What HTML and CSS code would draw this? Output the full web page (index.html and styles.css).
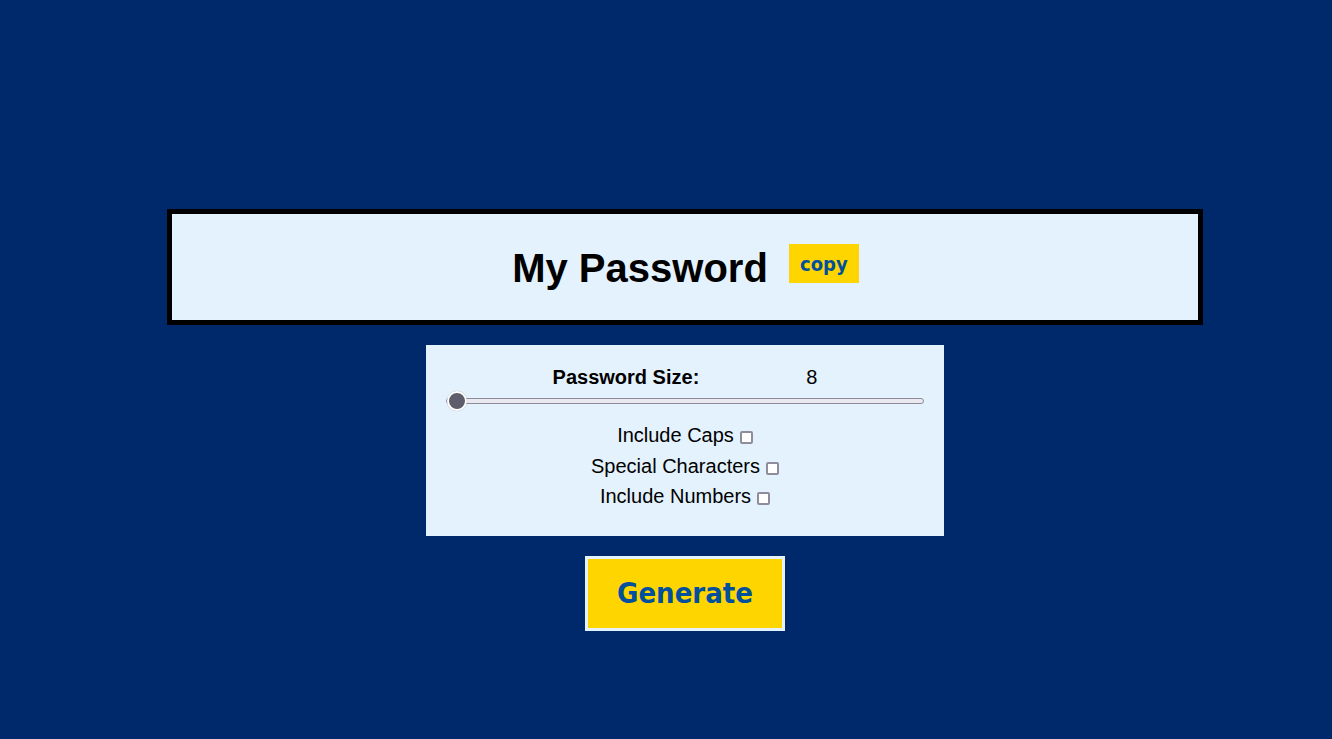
FILE: index.html
```html
<!DOCTYPE html>
<html lang="en">
<head>
<meta charset="utf-8">
<title>Password Generator</title>
<link rel="stylesheet" href="styles.css">
</head>
<body>
<main class="page">
  <section class="result">
    <h1 class="result-title">My Password</h1>
    <button class="copy-btn" type="button">copy</button>
  </section>
  <section class="settings">
    <div class="size-row">
      <span class="size-label">Password Size:</span>
      <span class="size-value">8</span>
    </div>
    <input class="slider" type="range" min="8" max="32" value="8">
    <div class="options">
      <label class="option">Include Caps<input class="check" type="checkbox"></label>
      <label class="option">Special Characters<input class="check" type="checkbox"></label>
      <label class="option">Include Numbers<input class="check" type="checkbox"></label>
    </div>
  </section>
  <button class="generate-btn" type="button">Generate</button>
</main>
</body>
</html>
```
FILE: styles.css
```css
html, body {
  margin: 0;
  padding: 0;
}
body {
  background: #00296b;
  min-height: 739px;
  font-family: "Liberation Sans", Arial, sans-serif;
  color: #000;
}
.page {
  margin-left: 38px;
  padding-top: 209px;
  display: flex;
  flex-direction: column;
  align-items: center;
}
.result {
  box-sizing: border-box;
  width: 80%;
  background: #e3f2fd;
  border: 5px solid #000;
  padding: 31px 0 29px;
  display: flex;
  justify-content: center;
  align-items: flex-start;
  gap: 21px;
}
.result-title {
  margin: 0 0 0 1px;
  font: 700 40px/46px "Liberation Sans", Arial, sans-serif;
}
.copy-btn {
  margin-top: -1px;
  width: 70px;
  height: 39px;
  padding: 0;
  border: none;
  background: #ffd500;
  color: #00509d;
  font: 700 20px/1 "DejaVu Sans Condensed", "DejaVu Sans", sans-serif;
  font-stretch: condensed;
  cursor: pointer;
}
.settings {
  box-sizing: border-box;
  width: 518px;
  margin-top: 20px;
  background: #e3f2fd;
  padding: 21px 20px 24px;
}
.size-row {
  display: flex;
  justify-content: center;
  gap: 107px;
  font-size: 20px;
  line-height: 23px;
}
.size-label {
  font-weight: 700;
}
.slider {
  -webkit-appearance: none;
  appearance: none;
  display: block;
  width: 100%;
  height: 20px;
  margin: 2px 0 0;
  background: transparent;
}
.slider::-webkit-slider-runnable-track {
  height: 6px;
  box-sizing: border-box;
  background: #ebe9f0;
  border: 1px solid #8d8b9b;
  border-radius: 3px;
}
.slider::-webkit-slider-thumb {
  -webkit-appearance: none;
  appearance: none;
  width: 20px;
  height: 20px;
  margin-top: -8px;
  box-sizing: border-box;
  border-radius: 50%;
  background: #5e5d6c;
  border: 2px solid #fff;
  box-shadow: 0 0 1px rgba(0,0,0,0.35);
}
.options {
  margin-top: 9px;
}
.option {
  display: block;
  text-align: center;
  font-size: 20px;
  line-height: 30.5px;
}
.check {
  -webkit-appearance: none;
  appearance: none;
  box-sizing: border-box;
  width: 13px;
  height: 13px;
  margin: 0 0 0 6px;
  vertical-align: -2px;
  background: #fff;
  border: 2px solid #8f8d9c;
  border-radius: 2px;
}
.generate-btn {
  box-sizing: border-box;
  margin-top: 20px;
  width: 200px;
  height: 75px;
  padding: 0;
  border: 3px solid #e3f2fd;
  background: #ffd500;
  color: #00509d;
  font: 700 29px/1 "DejaVu Sans Condensed", "DejaVu Sans", sans-serif;
  font-stretch: condensed;
  cursor: pointer;
}
```
